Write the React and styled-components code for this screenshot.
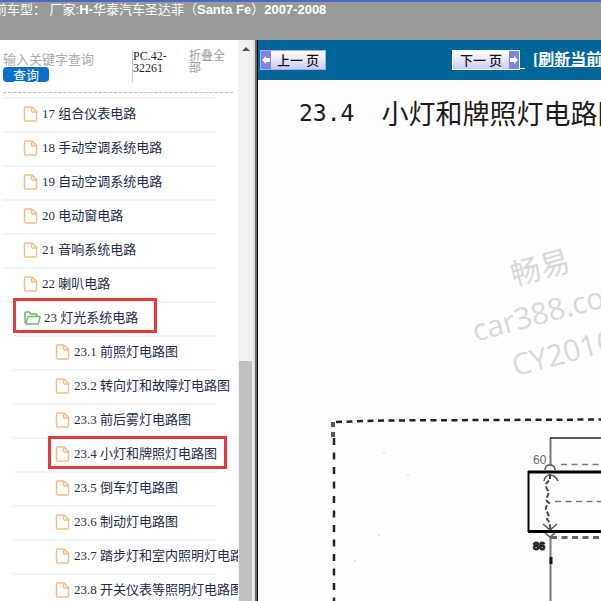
import styled, { createGlobalStyle } from "styled-components";

const GlobalStyle = createGlobalStyle`
  * { box-sizing: border-box; }
  body {
    margin: 0;
    background: #fff;
    font-family: "Liberation Serif", "Noto Sans CJK SC", serif;
    overflow: hidden;
  }
  ul { list-style: none; margin: 0; padding: 0; }
`;

const Page = styled.div`
  display: flex;
  flex-direction: column;
  height: 100vh;
  overflow: hidden;
`;

const Header = styled.header`
  flex: none;
  height: 40px;
  border-top: 2px solid #4a68c8;
  background: #999;
  color: #fff;
  font: bold 13px/16px "Liberation Sans", "Noto Sans CJK SC", sans-serif;
  text-indent: -6px;
  white-space: nowrap;
  span { font-weight: 400; }
`;

const Body = styled.div`
  display: flex;
  flex: 1;
  min-height: 0;
`;

const Sidebar = styled.aside`
  flex: none;
  width: 238px;
  overflow: hidden;
`;

const SearchBar = styled.form`
  display: flex;
  height: 53px;
  margin: 0 5px 4px 3px;
  padding-top: 10px;
  border-bottom: 1px dashed #bbb;
  font-size: 12px;
  line-height: 12px;
`;

const SearchBox = styled.div`
  width: 129px;
`;

const SearchInput = styled.input`
  display: block;
  width: 100%;
  height: 17px;
  padding: 0;
  border: 0;
  outline: 0;
  font: 13px/17px "Noto Sans CJK SC", sans-serif;
  &::placeholder { color: #aaa; opacity: 1; }
`;

const SearchButton = styled.button`
  display: block;
  width: 46px;
  height: 15px;
  padding: 0;
  border: 0;
  border-radius: 4px;
  background: #0a6fcb;
  color: #fff;
  font: 13px/15px "Noto Sans CJK SC", sans-serif;
`;

const Code = styled.div`
  width: 57px;
  height: 32px;
  padding-right: 16px;
  border-left: 1px solid #ccc;
  color: #222;
`;

const Collapse = styled.a`
  width: 38px;
  color: #999;
  text-decoration: none;
`;

const Row = styled.li`
  display: flex;
  align-items: center;
  height: 34px;
  margin-left: ${(p) => (p.$child ? 13 : 3)}px;
  padding-left: ${(p) => (p.$child ? 42 : 20)}px;
  background: linear-gradient(#f3f3f3, #f3f3f3) 0 0 / ${(p) => (p.$child ? 204 : 214)}px 2px no-repeat;
`;

const RowLink = styled.a`
  position: relative;
  display: flex;
  align-items: center;
  gap: ${(p) => (p.$open ? 3 : 4)}px;
  color: #1c2c4a;
  font-size: 13px;
  line-height: 20px;
  white-space: nowrap;
  text-decoration: none;
  svg { flex: none; }
`;

const Mark = styled.span`
  position: absolute;
  inset: ${(p) => (p.$child ? "-8px -10px -5px -7px" : "-10px -19px -5px -10px")};
  border: 3px solid #e13c3c;
`;

const Scrollbar = styled.div`
  display: flex;
  flex: none;
  flex-direction: column;
  align-items: center;
  width: 15px;
  background: #f1f1f1;
`;

const ScrollArrow = styled.div`
  margin-top: 7px;
  border: 4px solid transparent;
  border-top: 0;
  border-bottom-color: #505050;
`;

const ScrollThumb = styled.div`
  flex: 1;
  width: 13px;
  margin-top: 310px;
  background: #c1c1c1;
`;

const Divider = styled.div`
  flex: none;
  width: 5px;
  border-left: 2px solid #e4e4e4;
  border-right: 1px solid #000;
  background: #666;
`;

const Viewer = styled.main`
  display: flex;
  flex: 1;
  flex-direction: column;
  min-width: 0;
  overflow: hidden;
`;

const Toolbar = styled.nav`
  display: flex;
  flex: none;
  align-items: center;
  height: 40px;
  padding: 0 2px;
  background: #00669a;
  white-space: nowrap;
`;

const PageButton = styled.button`
  display: flex;
  flex: none;
  flex-direction: ${(p) => (p.$next ? "row-reverse" : "row")};
  align-items: stretch;
  width: ${(p) => (p.$next ? 68 : 66)}px;
  height: 20px;
  margin-right: ${(p) => (p.$next ? 0 : 126)}px;
  padding: 0;
  border: ${(p) => (p.$next ? "1px solid #fff" : "1px solid #a9aef0")};
  background: linear-gradient(#ffffff, #ccccf6);
  color: #111;
  font: 500 13px/18px "Noto Sans CJK SC", sans-serif;
  svg { flex: none; }
  span { flex: 1; }
`;

const Refresh = styled.a`
  flex: none;
  margin-left: 8px;
  color: #fff;
  font: bold 16px/20px "Liberation Serif", "Noto Sans CJK SC", sans-serif;
`;

const LinkGap = styled.span`
  flex: none;
  width: 5px;
  height: 17px;
  border-bottom: 1px solid #fff;
`;

const Sheet = styled.section`
  position: relative;
  flex: 1;
  overflow: hidden;
  background: #fefefe;
`;

const Title = styled.h1`
  display: flex;
  align-items: center;
  gap: 27px;
  margin: 0;
  padding: 16px 0 0 41px;
  color: #1a1a1a;
  font: 400 27px/34px "Noto Sans CJK SC", sans-serif;
  white-space: nowrap;
  span { font-family: "DejaVu Sans Mono", monospace; font-size: 23px; }
`;

const Watermark = styled.div`
  position: absolute;
  left: 212px;
  top: 164px;
  color: #d8d8d8;
  font: 30px/44px "Open Sans", "Noto Sans CJK SC", sans-serif;
  white-space: pre;
  text-align: center;
  transform: rotate(-15deg);
`;

const Diagram = styled.svg`
  position: absolute;
  left: 62px;
  top: 320px;
`;

const items = [
  { name: "17 组合仪表电路" },
  { name: "18 手动空调系统电路" },
  { name: "19 自动空调系统电路" },
  { name: "20 电动窗电路" },
  { name: "21 音响系统电路" },
  { name: "22 喇叭电路" },
  { name: "23 灯光系统电路", open: true, marked: true },
  { name: "23.1 前照灯电路图", child: true },
  { name: "23.2 转向灯和故障灯电路图", child: true },
  { name: "23.3 前后雾灯电路图", child: true },
  { name: "23.4 小灯和牌照灯电路图", child: true, marked: true },
  { name: "23.5 倒车灯电路图", child: true },
  { name: "23.6 制动灯电路图", child: true },
  { name: "23.7 踏步灯和室内照明灯电路图", child: true },
  { name: "23.8 开关仪表等照明灯电路图", child: true },
];

function FileIcon() {
  return (
    <svg width="15" height="16" viewBox="0 0 15 16" fill="none" stroke="#f3bd82" strokeWidth="1.5" strokeLinejoin="round">
      <path d="M2.500 1H9l4.500 4.500V14q0 1-1 1h-10q-1 0-1-1V2q0-1 1-1z" />
      <path d="M8.500 1v4q0 1 1 1h4" />
    </svg>
  );
}

function FolderIcon() {
  return (
    <svg width="18" height="16" viewBox="0 0 18 16" fill="none" stroke="#67bb6b" strokeWidth="1.5" strokeLinejoin="round">
      <path d="M3.500 14L2 12.500V3q0-1 1-1h3.300l1.500 2H13q1 0 1 1v1.500" />
      <path d="M5.500 6.500H16.300q1 0 .7 1l-1.500 5.500q-.3 1-1.300 1H3.800q-1 0-.7-1l1.500-5.500q.3-1 .9-1z" />
    </svg>
  );
}

function Arrow({ next }) {
  return (
    <svg width="10" height="18" viewBox="0 0 10 18">
      <path fill="#7b83e4" d="M0 0h10v18H0z" />
      <path fill="#fff" d={next ? "M9 9L5 5v2H1v4h4v2z" : "M1 9l4-4v2h4v4H5v2z"} />
    </svg>
  );
}

function Circuit() {
  return (
    <Diagram width="282" height="202" viewBox="320 400 282 202" fill="none" stroke="#222">
      <path d="M336 422L382 420.500 601 419.500" strokeWidth="2.500" strokeDasharray="6 4.500" />
      <path d="M334 438V601" strokeWidth="2.500" strokeDasharray="7 7.500" />
      <path d="M333 422v20" stroke="#555" strokeWidth="4" strokeDasharray="5 5" />
      <path d="M550.500 438v27M550.500 536v65" stroke="#777" strokeWidth="2" />
      <path d="M550 438h51" strokeWidth="1.500" />
      <path d="M528 472h73M528 531.500h73" stroke="#000" strokeWidth="3" />
      <path d="M528.500 471v61" stroke="#000" strokeWidth="2" />
      <path d="M561 464.500h40M555 501.500h46" stroke="#777" strokeWidth="1.500" strokeDasharray="6 4.500" />
      <path d="M551 537.500h50" stroke="#666" strokeWidth="3" strokeDasharray="6 4.500" />
      <path d="M545 470q0-5 5-5t5 5M544 481q1-6 6-6t8 6M543 524l7 6 7-6M545 533l5 4 5-4" stroke="#555" strokeWidth="1.500" />
      <path d="M550 474v6q-6 3-3 9 3 4 0 8-2 4 2 6-5 5-2 9 3 4 0 7 4 5 3 11" stroke="#444" strokeWidth="2" strokeDasharray="5 2" />
      <path d="M551 557v7" stroke="#111" strokeWidth="3" />
      <text x="533" y="464" fill="#666" stroke="none" fontFamily="Liberation Sans" fontSize="12">60</text>
      <text x="533" y="550" fill="#222" stroke="#222" fontFamily="Liberation Sans" fontSize="11" fontWeight="700">86</text>
      <g fill="#ddd" stroke="none">
        <circle cx="384" cy="453" r="1" />
        <circle cx="408" cy="475" r="1" />
        <circle cx="379" cy="535" r="1" />
        <circle cx="355" cy="561" r="1" />
      </g>
    </Diagram>
  );
}

function App() {
  return (
    <Page>
      <GlobalStyle />
      <Header>
        <span>前车型： 厂家:</span>H-<span>华泰汽车圣达菲（</span>Santa Fe<span>）</span>2007-2008
      </Header>
      <Body>
        <Sidebar>
          <SearchBar onSubmit={(e) => e.preventDefault()}>
            <SearchBox>
              <SearchInput aria-label="输入关键字查询" placeholder="输入关键字查询" />
              <SearchButton>查询</SearchButton>
            </SearchBox>
            <Code>PC.42-32261</Code>
            <Collapse href="#">折叠全部</Collapse>
          </SearchBar>
          <ul>
            {items.map((item) => (
              <Row key={item.name} $child={item.child}>
                <RowLink href="#" $open={item.open}>
                  {item.open ? <FolderIcon /> : <FileIcon />}
                  {item.name}
                  {item.marked && <Mark $child={item.child} />}
                </RowLink>
              </Row>
            ))}
          </ul>
        </Sidebar>
        <Scrollbar>
          <ScrollArrow />
          <ScrollThumb />
        </Scrollbar>
        <Divider />
        <Viewer>
          <Toolbar>
            <PageButton><Arrow /><span>上一 页</span></PageButton>
            <PageButton $next><Arrow next /><span>下一 页</span></PageButton>
            <LinkGap />
            <Refresh href="#">[刷新当前页]</Refresh>
          </Toolbar>
          <Sheet>
            <Title><span>23.4</span>小灯和牌照灯电路图</Title>
            <Watermark>{"畅易\ncar388.com\nCY2016"}</Watermark>
            <Circuit />
          </Sheet>
        </Viewer>
      </Body>
    </Page>
  );
}

export default App;
